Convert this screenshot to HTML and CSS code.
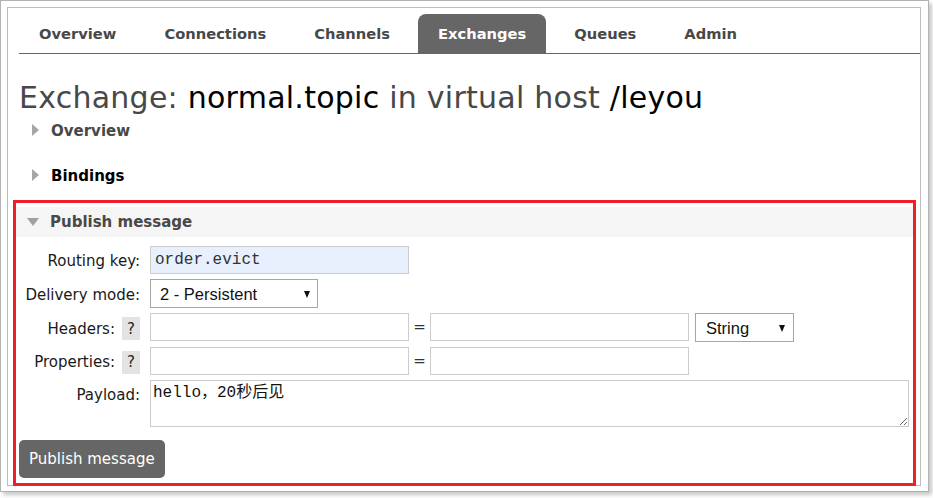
FILE: index.html
```html
<!DOCTYPE html>
<html lang="en">
<head>
<meta charset="utf-8">
<title>Exchange: normal.topic</title>
<link rel="stylesheet" href="styles.css">
</head>
<body>
<div class="shot">
  <div class="frame">
    <nav class="tabs">
      <a class="tab">Overview</a>
      <a class="tab">Connections</a>
      <a class="tab">Channels</a>
      <a class="tab active">Exchanges</a>
      <a class="tab">Queues</a>
      <a class="tab">Admin</a>
    </nav>
    <h1 class="title"><span class="muted">Exchange:</span> normal.topic <span class="muted">in virtual host</span> /leyou</h1>
    <section class="panel first">
      <h2 class="panel-head collapsed">Overview</h2>
    </section>
    <section class="panel">
      <h2 class="panel-head collapsed dark">Bindings</h2>
    </section>
    <div class="highlight">
      <section class="panel open">
        <h2 class="panel-head expanded">Publish message</h2>
        <form class="publish-form">
          <label class="field-label">Routing key:</label>
          <div class="field"><input class="text-input autofill" type="text" value="order.evict"></div>

          <label class="field-label">Delivery mode:</label>
          <div class="field"><span class="select-wrap mode"><select class="select"><option>2 - Persistent</option></select></span></div>

          <label class="field-label">Headers: <span class="help">?</span></label>
          <div class="field pair">
            <input class="text-input" type="text">
            <span class="eq">=</span>
            <input class="text-input" type="text">
            <span class="select-wrap type"><select class="select"><option>String</option></select></span>
          </div>

          <label class="field-label">Properties: <span class="help">?</span></label>
          <div class="field pair">
            <input class="text-input" type="text">
            <span class="eq">=</span>
            <input class="text-input" type="text">
          </div>

          <label class="field-label top">Payload:</label>
          <div class="field"><textarea class="payload">hello，20秒后见</textarea></div>
        </form>
        <button class="btn" type="button">Publish message</button>
      </section>
    </div>
  </div>
</div>
</body>
</html>
```

FILE: styles.css
```css
* { box-sizing: border-box; }

html, body {
  margin: 0;
  padding: 0;
  background: #fff;
}

body {
  font-family: "DejaVu Sans", Verdana, sans-serif;
  font-size: 15px;
  color: #222;
  width: 933px;
  height: 498px;
  overflow: hidden;
}

.shot {
  width: 929px;
  height: 492px;
  border: 1px solid #b2b2b2;
  padding: 6px 7px 5px 6px;
  box-shadow: 3px 3px 4px rgba(0, 0, 0, 0.22);
  background: #fff;
}

.frame {
  height: 479px;
  border: 1px solid #bdbdbd;
  padding: 6px 0 0 11px;
}

/* tabs */
.tabs {
  display: flex;
  gap: 8px;
  border-bottom: 1px solid #666;
}

.tab {
  padding: 0 20px;
  line-height: 39px;
  font-weight: bold;
  font-size: 14.7px;
  color: #484848;
  text-decoration: none;
}

.tab.active {
  background: #666;
  color: #fff;
  border-radius: 8px 8px 0 0;
}

/* title */
.title {
  margin: 27px 0 0 0;
  font-size: 30px;
  letter-spacing: 0.25px;
  line-height: 34px;
  font-weight: normal;
  color: #000;
}

.title .muted { color: #484848; }

/* panels */
.panel {
  margin: 15px 7px 0 -3px;
}

.panel.first { margin-top: 1px; }

.panel-head {
  display: flex;
  align-items: center;
  height: 30px;
  margin: 0;
  font-size: 15px;
  font-weight: bold;
  color: #484848;
}

.panel-head.dark { color: #000; }

.panel-head.collapsed::before {
  content: "";
  margin: 0 12px 3px 16px;
  border-left: 7px solid #a6a6a6;
  border-top: 6.5px solid transparent;
  border-bottom: 6.5px solid transparent;
}

.panel-head.expanded {
  background: #f5f5f5;
}

.panel-head.expanded::before {
  content: "";
  margin: 0 11px 0 11px;
  border-top: 8px solid #a0a0a0;
  border-left: 6.5px solid transparent;
  border-right: 6.5px solid transparent;
}

/* red annotation */
.highlight {
  margin: 9px 4px 0 -6px;
  border: 3px solid #ef1f28;
  padding: 4px 0 5px 0;
}

.highlight .panel.open {
  margin: 0;
}

/* form */
.publish-form {
  display: grid;
  grid-template-columns: 121px 1fr;
  column-gap: 10px;
  row-gap: 5px;
  align-items: center;
  padding: 9px 4px 0 3px;
}

.field-label {
  display: flex;
  justify-content: flex-end;
  align-items: center;
  padding-top: 2px;
  font-size: 15px;
  color: #1a1a1a;
  white-space: nowrap;
}

.field-label.top {
  align-self: start;
  margin-top: 4px;
}

.help {
  display: inline-flex;
  align-items: center;
  justify-content: center;
  width: 18px;
  height: 23px;
  margin-left: 7px;
  background: #e3e3e3;
  color: #222;
  font-size: 15px;
}

.field {
  display: flex;
  align-items: flex-start;
}

.text-input {
  width: 259px;
  height: 28px;
  border: 1px solid #ccc;
  padding: 0 4px;
  font-family: "Liberation Mono", "Courier New", monospace;
  font-size: 16px;
  color: #222;
  background: #fff;
  outline: none;
}

.text-input.autofill {
  background: #e8f0fe;
  color: #333;
}

.eq {
  width: 21px;
  text-align: center;
  line-height: 28px;
  font-size: 15px;
  color: #333;
}

.select-wrap {
  position: relative;
  display: inline-block;
}

.select-wrap.type { margin-left: 6px; }

.select {
  -webkit-appearance: none;
  appearance: none;
  height: 29px;
  border: 1px solid #a6a6a6;
  border-radius: 0;
  background: #fff;
  font-family: "Liberation Sans", Arial, sans-serif;
  font-size: 16.5px;
  color: #111;
  padding: 0 0 0 9px;
  outline: none;
}

.mode .select { width: 168px; }
.type .select { width: 99px; padding-left: 10px; }

.select-wrap::after {
  content: "";
  position: absolute;
  top: 12px;
  right: 8px;
  border-top: 7px solid #111;
  border-left: 3.5px solid transparent;
  border-right: 3.5px solid transparent;
  pointer-events: none;
}

.type::after { right: 9px; }

.payload {
  display: block;
  width: 100%;
  height: 47px;
  border: 1px solid #ccc;
  padding: 2px 2px;
  font-family: "Liberation Mono", "Noto Sans CJK SC", monospace;
  font-size: 16px;
  line-height: 20px;
  color: #111;
  outline: none;
}

/* button */
.btn {
  display: block;
  margin: 13px 0 0 3px;
  height: 38px;
  padding: 0 10px;
  border: none;
  border-radius: 5px;
  background: #666;
  color: #fff;
  font-family: "DejaVu Sans", Verdana, sans-serif;
  font-size: 15px;
}
```
